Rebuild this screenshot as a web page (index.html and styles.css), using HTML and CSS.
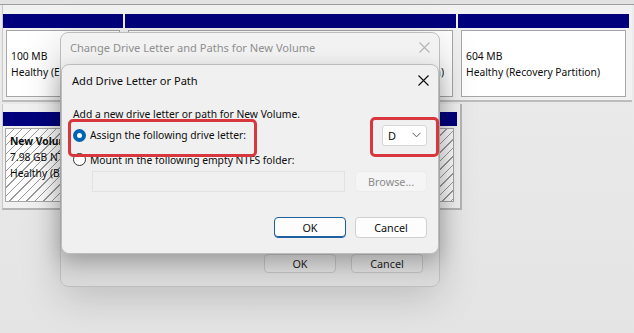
FILE: index.html
```
<!DOCTYPE html>
<html>
<head>
<meta charset="utf-8">
<link rel="stylesheet" href="styles.css">
</head>
<body>
<div class="screen">
  <div class="strip"></div>
  <div class="row row1">
    <div class="part p1">
      <div class="bar"></div>
      <div class="box"><div class="blank"></div><div>100 MB</div><div>Healthy (EFI System Partition)</div></div>
    </div>
    <div class="part p2">
      <div class="bar"></div>
      <div class="box"><div class="blank"></div><div class="blank"></div><div>Healthy (Boot, Page File, Crash Dump, Basic Data Partition)</div></div>
    </div>
    <div class="part p3">
      <div class="bar"></div>
      <div class="box"><div class="blank"></div><div>604 MB</div><div>Healthy (Recovery Partition)</div></div>
    </div>
  </div>
  <div class="row row2">
    <div class="part p4">
      <div class="bar"></div>
      <div class="box"><div class="bold">New Volume</div><div>7.98 GB NTFS</div><div>Healthy (Basic Data Partition)</div></div>
    </div>
  </div>

  <div class="dialog back">
    <div class="titlebar">
      <span class="title">Change Drive Letter and Paths for New Volume</span>
      <svg class="close" width="11" height="11" viewBox="0 0 11 11"><path d="M0.5 0.5L10.5 10.5M10.5 0.5L0.5 10.5" stroke="currentColor" stroke-width="1.1" fill="none"/></svg>
    </div>
    <div class="spacer"></div>
    <div class="back-actions">
      <div class="btn gray">OK</div>
      <div class="btn gray">Cancel</div>
    </div>
  </div>

  <div class="dialog front">
    <div class="titlebar">
      <span class="title">Add Drive Letter or Path</span>
      <svg class="close" width="11" height="11" viewBox="0 0 11 11"><path d="M0.5 0.5L10.5 10.5M10.5 0.5L0.5 10.5" stroke="currentColor" stroke-width="1.1" fill="none"/></svg>
    </div>
    <div class="body">
      <div class="intro">Add a new drive letter or path for New Volume.</div>
      <div class="line1">
        <div class="radio-row mark mark1">
          <span class="radio on"></span>
          <span>Assign the following drive letter:</span>
        </div>
        <div class="mark mark2">
          <div class="select"><span>D</span>
            <svg width="9" height="6" viewBox="0 0 9 6"><path d="M0.5 0.8L4.5 4.8L8.5 0.8" stroke="#555" stroke-width="1" fill="none"/></svg>
          </div>
        </div>
      </div>
      <div class="radio-row r2">
        <span class="radio"></span>
        <span>Mount in the following empty NTFS folder:</span>
      </div>
      <div class="folder">
        <div class="input"></div>
        <div class="btn disabled">Browse...</div>
      </div>
      <div class="front-actions">
        <div class="btn primary">OK</div>
        <div class="btn">Cancel</div>
      </div>
    </div>
  </div>
</div>
</body>
</html>
```
FILE: styles.css
```
* { box-sizing: border-box; }
html, body { margin: 0; padding: 0; }
body {
  width: 634px; height: 333px; overflow: hidden;
  font-family: "Noto Sans", "Open Sans", sans-serif;
  font-size: 10.3px; color: #0d0d0d;
  background: #e6e6e6;
}
.screen { position: relative; width: 634px; height: 333px; overflow: hidden;
  background: linear-gradient(#ececec, #e4e4e4); }
.strip { height: 5px; background: #e2e2e2; border-bottom: 1px solid #9d9d9d; }
.row { display: flex; border-left: 1px solid #c8c8c8; margin-left: 2px; }
.row1 { padding-top: 9px; height: 97px; background: #f1f1f1; border-bottom: 2px solid #bdbdbd; width: 630px; gap: 2px; }
.part { display: flex; flex-direction: column; }
.bar { height: 14px; background: #00007c; }
.box {
  margin: 2px 3px 0 3px; background: #fff; border: 1px solid #a6a6a6;
  height: 67px; padding: 1px 4px 0 4px; white-space: nowrap; overflow: hidden;
  line-height: 16px;
}
.blank { height: 16px; }
.p1 { width: 120px; }
.p2 { width: 331px; }
.p2 .box { text-align: right; padding-right: 8px; }
.p3 { width: 171px; }
.bold { font-weight: bold; }
.row2 { padding-top: 8px; width: 460px; height: 106px; background: #f1f1f1;
  border-right: 2px solid #b5b5b5; border-bottom: 2px solid #b5b5b5; margin-top: 2px; }
.p4 { width: 454px; }
.p4 .box { height: 74px; padding-top: 4px; margin-left: 2px;
  background: repeating-linear-gradient(135deg, #fdfdfd 0 5px, #9a9a9a 5px 6px); }

.dialog {
  position: absolute; border-radius: 8px; background: #f0f0f0;
  border: 1px solid #bdbdbd; display: flex; flex-direction: column;
}
.back { left: 60px; top: 32px; width: 380px; height: 255px;
  background: linear-gradient(#f2f2f2 0, #f2f2f2 60%, #d4d4d4 80%, #dadada 100%);
  box-shadow: 0 10px 40px rgba(0,0,0,0.18); }
.back .title { color: #8f8f8f; }
.back .close { color: #b4b4b4; }
.front { left: 61px; top: 64px; width: 378px; height: 190px;
  box-shadow: 0 8px 22px rgba(0,0,0,0.28); background: #f0f0f0; }
.titlebar { height: 31px; display: flex; align-items: center; justify-content: space-between;
  padding: 0 9px 0 10px; font-size: 11.1px; }
.back .titlebar { height: 29px; padding-left: 9px; }
.spacer { flex: 1; }
.back-actions { display: flex; justify-content: flex-end; gap: 15px; padding: 0 16px 13px 0; }
.btn { width: 72px; height: 21px; border: 1px solid #d0d0d0; border-radius: 4px; background: #fdfdfd;
  display: flex; align-items: center; justify-content: center; font-size: 10.8px; }
.btn.gray { height: 19px; background: #dcdcdc; border-color: #bfbfbf; color: #222; }
.btn.primary { border-color: #1f5f9e; box-shadow: inset 0 -1px 0 #1f5f9e; }
.btn.disabled { color: #8c8c8c; background: #f5f5f5; border-color: #ececec; }

.body { padding: 10px 11px 0 10px; display: flex; flex-direction: column; }
.intro { height: 16px; line-height: 16px; padding-left: 1px; }
.line1 { display: flex; justify-content: space-between; align-items: center; height: 26px; }
.radio-row { display: flex; align-items: center; gap: 4px; padding-left: 1px; height: 16px; }
.r2 { height: 23px; }
.radio { width: 13px; height: 13px; border-radius: 50%; border: 1px solid #333; background: #fff; flex: none; }
.radio.on { background: #fff; border: 4px solid #0063b1; }
.mark { position: relative; }
.mark::after { content: ""; position: absolute; border: 3px solid #d8383d; border-radius: 5px; }
.mark1::after { left: -4px; top: -8px; width: 183px; height: 32px; }
.mark2::after { left: -12px; top: -8px; width: 63px; height: 34px; }
.select { width: 45px; height: 21px; background: #fff; border: 1px solid #d6d6d6; border-radius: 3px;
  display: flex; align-items: center; justify-content: space-between; padding: 0 5px; font-size: 11px; }
.folder { display: flex; gap: 10px; padding-left: 20px; }
.input { width: 254px; height: 21px; border: 1px solid #e2e2e2; background: #f0f0f0; }
.front-actions { display: flex; justify-content: flex-end; gap: 9px; margin-top: 25px; }
```
